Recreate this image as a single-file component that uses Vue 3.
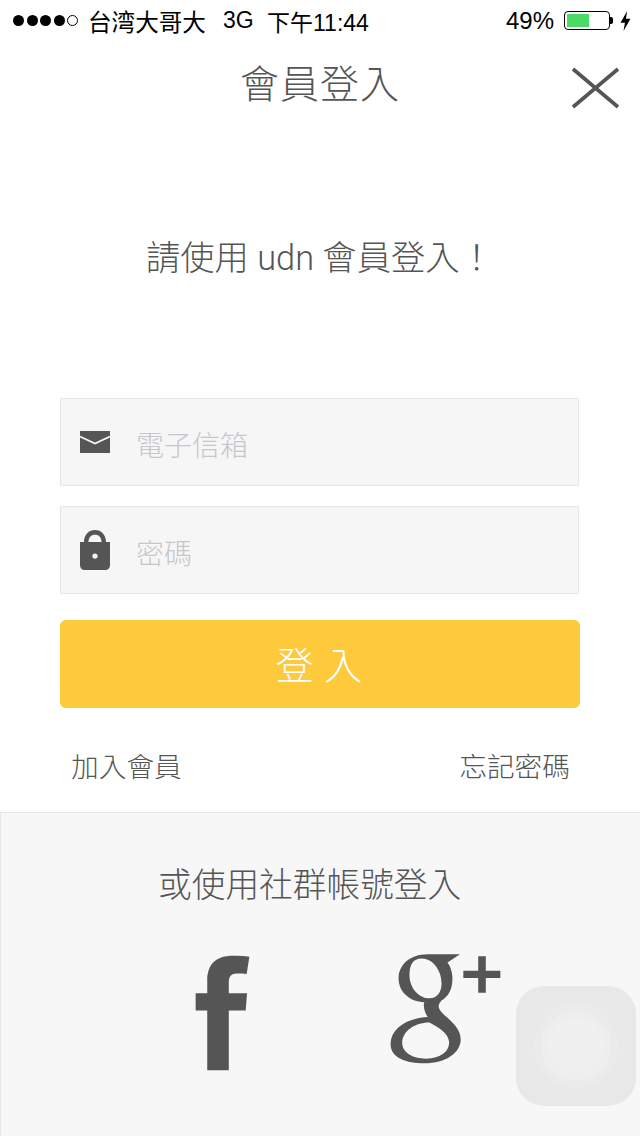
<script setup>
const dots = [1, 1, 1, 1, 1]
</script>

<template>
  <div class="page">
    <div class="status">
      <div class="signal">
        <i v-for="(d, n) in dots" :key="n" class="dot" :class="{ empty: n === 4 }"></i>
      </div>
      <span class="carrier">台湾大哥大</span>
      <span class="net">3G</span>
      <span class="time">下午11:44</span>
      <span class="pct">49%</span>
      <div class="battery"><div class="level"></div></div>
      <i class="nub"></i>
      <svg class="bolt" width="11" height="20" viewBox="0 0 10 18"><path d="M6.500 0 0.500 10.500H4.500L3.200 18 9.500 7H5.400Z" fill="#000" /></svg>
    </div>

    <header class="head">
      <h1>會員登入</h1>
      <svg class="close" width="50" height="42" viewBox="0 0 50 42">
        <path d="M2 2 47 40M47 2 2 40" stroke="#555" stroke-width="3.600" fill="none" />
      </svg>
    </header>

    <p class="lead">請使用 udn 會員登入！</p>

    <form class="form" @submit.prevent>
      <div class="field">
        <svg class="ficon" width="30" height="22" viewBox="0 0 30 22">
          <rect width="30" height="22" fill="#555" />
          <path d="M0 5.500 15 12.500 30 5.500" stroke="#f6f6f6" stroke-width="1.800" fill="none" />
        </svg>
        <span class="ph">電子信箱</span>
      </div>
      <div class="field">
        <svg class="ficon" width="30" height="40" viewBox="0 0 30 40">
          <path fill="#555" fill-rule="evenodd" d="M4 12C4 4.500 9 0 15 0S26 4.500 26 12H30V35C30 38 28 40 25 40H5C2 40 0 38 0 35V12ZM8.500 12H21.500C21.500 7.500 19 4.800 15 4.800S8.500 7.500 8.500 12ZM15 23.500A2.600 2.600 0 1 0 15 28.700 2.600 2.600 0 1 0 15 23.500Z" />
        </svg>
        <span class="ph">密碼</span>
      </div>
      <button class="submit" type="submit">登 入</button>
    </form>

    <div class="links">
      <span>加入會員</span>
      <span>忘記密碼</span>
    </div>

    <section class="social">
      <h2>或使用社群帳號登入</h2>
      <div class="brands">
        <svg class="fb" width="58" height="118" viewBox="70 70 175 355">
          <path fill="#555" d="M113 420V240H78V188H113V150C113 100 140 75 190 75C210 75 228 76 240 78L232 130C222 128 212 128 203 128C185 128 178 137 178 155V188H233L229 240H178V420Z" />
        </svg>
        <svg class="gp" width="114" height="114" viewBox="650 65 345 345">
          <path fill="#555" fill-rule="evenodd" d="M868 72H770C715 72 682 105 682 145C682 185 715 215 760 217C755 230 762 250 770 262C710 265 658 295 658 345C658 385 705 402 760 402C825 402 870 370 870 330C870 295 840 275 815 250C800 235 800 225 812 212C835 198 845 175 845 145C845 125 838 108 830 97ZM752 85C725 85 715 105 715 135C715 175 745 205 775 205C800 205 812 185 812 160C812 120 785 85 752 85ZM775 278C730 278 693 305 693 340C693 370 725 388 765 388C810 388 835 365 835 340C835 315 810 295 775 278Z" />
          <path fill="#555" d="M923 78H946V122H990V144H946V188H923V144H878V122H923Z" />
        </svg>
      </div>
    </section>

    <div class="home"><div class="home-core"></div></div>
  </div>
</template>

<style>
html, body { margin: 0; background: #fff; }
</style>

<style scoped>
.page {
  position: relative;
  width: 640px;
  height: 1136px;
  overflow: hidden;
  background: #fff;
  color: #555;
  font-family: "Liberation Sans", "Noto Sans CJK TC", sans-serif;
}
.status {
  display: flex;
  align-items: center;
  height: 41px;
  padding-left: 13px;
  color: #000;
  font-size: 23.600px;
  box-sizing: border-box;
}
.signal { display: flex; gap: 2.500px; }
.dot { width: 11px; height: 11px; border-radius: 50%; background: #000; box-sizing: border-box; }
.dot.empty { background: none; border: 1px solid #000; }
.carrier { margin-left: 10px; width: 118px; white-space: nowrap; }
.net { margin-left: 17px; font-size: 23px; width: 32px; }
.time { margin-left: 12px; width: 102px; white-space: nowrap; font-size: 23px; }
.pct { margin-left: 137px; font-size: 24px; width: 50px; white-space: nowrap; }
.battery {
  margin-left: 8px;
  width: 46px;
  height: 19px;
  border: 1px solid #000;
  border-radius: 4px;
  padding: 2px;
  box-sizing: border-box;
}
.level { width: 22px; height: 100%; background: #4cd964; }
.nub { width: 3px; height: 7px; background: #000; border-radius: 0 2px 2px 0; }
.bolt { margin-left: 7px; }

.head {
  position: relative;
  height: 87px;
  display: flex;
  align-items: center;
  justify-content: center;
}
.head h1 {
  margin: 0;
  font-size: 39px;
  font-weight: 300;
  letter-spacing: 1px;
  line-height: 1;
}
.close { position: absolute; left: 571px; top: 26px; }

.lead {
  margin: 108px 0 0;
  padding-left: 146px;
  font-family: Roboto, "Noto Sans CJK TC", sans-serif;
  font-size: 34.300px;
  font-weight: 300;
  line-height: 44px;
}

.form {
  margin: 118px 0 0 60px;
  width: 520px;
  display: flex;
  flex-direction: column;
  gap: 20px;
}
.field {
  display: flex;
  align-items: center;
  height: 88px;
  width: 519px;
  box-sizing: border-box;
  background: #f6f6f6;
  border: 1px solid #e6e6e6;
  padding-left: 19px;
}
.ficon { flex: none; }
.ph {
  margin-left: 26px;
  padding-top: 4px;
  font-size: 28px;
  font-weight: 300;
  color: #c6c6cd;
}
.submit {
  margin-top: 6px;
  height: 88px;
  border: 0;
  border-radius: 6px;
  background: #ffc93c;
  color: #fff;
  font: inherit;
  font-size: 38px;
  font-weight: 300;
  padding: 0 2px 4px 0;
}

.links {
  display: flex;
  justify-content: space-between;
  padding: 0 70px 0 71px;
  margin-top: 39px;
  font-size: 27.700px;
  font-weight: 300;
  line-height: 42px;
}

.social {
  margin-top: 23px;
  height: 324px;
  box-sizing: border-box;
  background: #f7f7f7;
  border-top: 1px solid #e6e6e6;
  border-left: 1px solid #e6e6e6;
  padding: 49px 0 0 157px;
}
.social h2 {
  margin: 0;
  font-size: 33.700px;
  font-weight: 300;
  line-height: 46px;
}
.brands {
  display: flex;
  align-items: flex-start;
  margin-top: 46px;
  padding-left: 35px;
  gap: 137px;
}
.gp { margin-top: -2px; }

.home {
  position: absolute;
  left: 516px;
  top: 986px;
  width: 120px;
  height: 120px;
  border-radius: 28px;
  background: #e8e8e8;
  display: flex;
  align-items: center;
  justify-content: center;
}
.home-core {
  width: 56px;
  height: 56px;
  border-radius: 50%;
  background: #f0f0f0;
  box-shadow: 0 0 0 7px #eeeeee, 0 0 0 14px #ebebeb, 0 0 0 21px #e9e9e9;
}
</style>
